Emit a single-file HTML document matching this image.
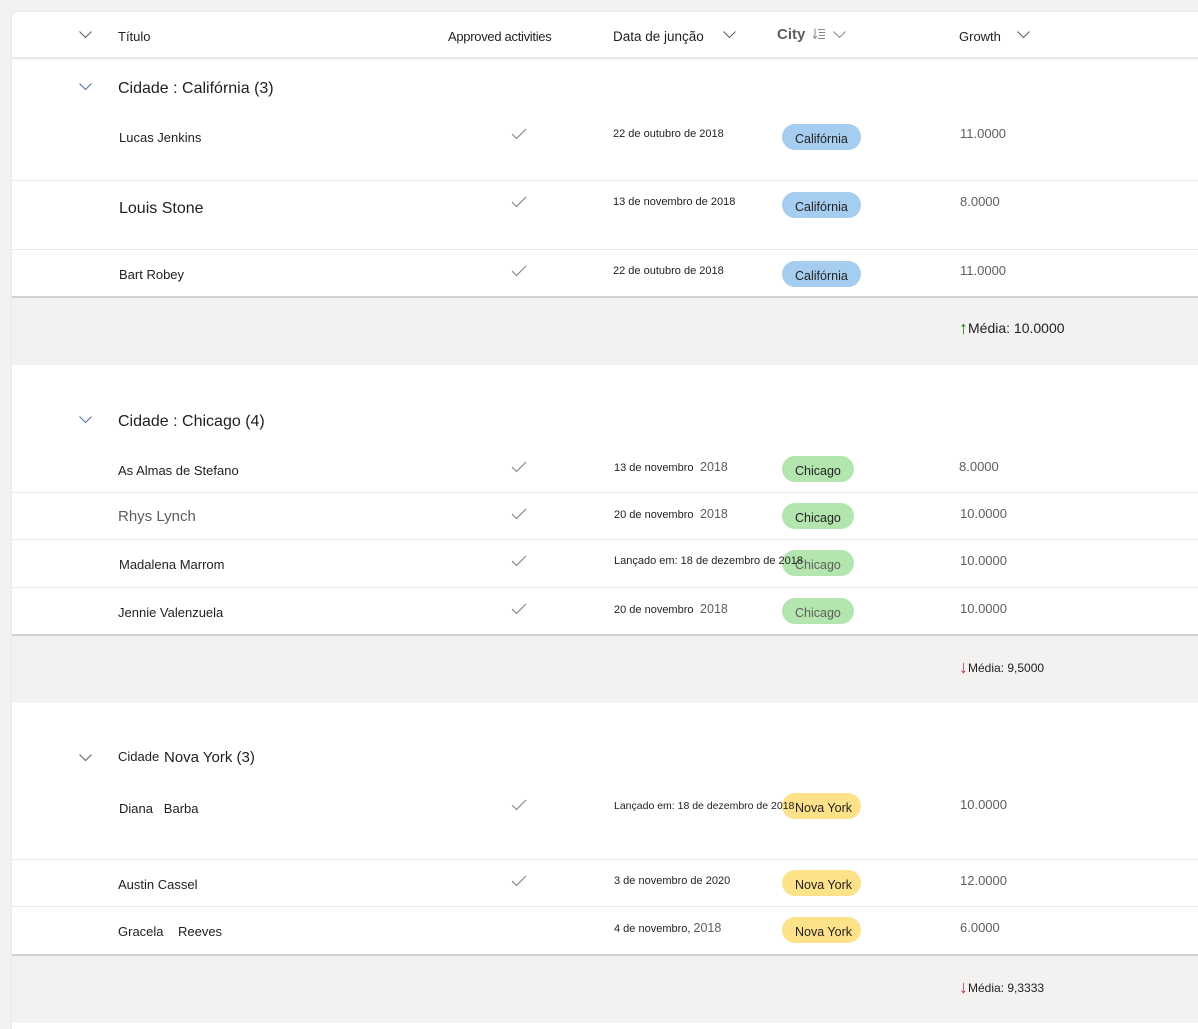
<!DOCTYPE html>
<html><head><meta charset="utf-8">
<style>
*{margin:0;padding:0;box-sizing:border-box}
html,body{width:1198px;height:1029px;overflow:hidden;background:#f3f2f1;font-family:"Liberation Sans",Arial,sans-serif;color:#201f1e}
#card{position:absolute;left:12px;top:12px;width:1186px;height:1017px;background:#fff;border-radius:6px 0 0 0;box-shadow:0 0 2px rgba(0,0,0,.12)}
.a{position:absolute;white-space:nowrap;line-height:16px}
.d{font-size:11px}
.hdr{position:absolute;left:12px;top:57px;width:1186px;height:3px;background:linear-gradient(#e6e6e6,#f6f6f6)}
.div{position:absolute;left:12px;width:1186px;height:1px;background:#edebe9}
.bd{position:absolute;left:12px;width:1186px;height:2px;background:#d2d0ce}
.foot{position:absolute;left:12px;width:1186px;height:67px;background:#f3f2f1}
.pill{position:absolute;height:26px;border-radius:13px;font-size:12.5px;line-height:30px;padding-left:13px}
.ca{background:#a5cdef;width:79px}
.ch{background:#b2e6ae;width:72px}
.ny{background:#fde28a;width:79px}
.g{color:#605e5c}
.ar{font-size:18px;position:relative;top:1px}
svg{position:absolute}
</style></head><body>
<div id="card"></div>
<div class="hdr"></div>

<!-- pills first -->
<div class="pill ca" style="left:782px;top:124px">Califórnia</div>
<div class="pill ca" style="left:782px;top:192px">Califórnia</div>
<div class="pill ca" style="left:782px;top:261px">Califórnia</div>
<div class="pill ch" style="left:782px;top:456px">Chicago</div>
<div class="pill ch" style="left:782px;top:503px">Chicago</div>
<div class="pill ch g" style="left:782px;top:550px">Chicago</div>
<div class="pill ch g" style="left:782px;top:598px">Chicago</div>
<div class="pill ny" style="left:782px;top:793px">Nova York</div>
<div class="pill ny" style="left:782px;top:870px">Nova York</div>
<div class="pill ny" style="left:782px;top:917px">Nova York</div>

<!-- header -->
<svg style="left:79px;top:31px" width="13" height="8" viewBox="0 0 13 8"><path d="M0.5 0.5L6.5 6.5L12.5 0.5" fill="none" stroke="#605e5c" stroke-width="1"/></svg>
<div class="a" style="left:118px;top:29px;font-size:13px">Título</div>
<div class="a" style="left:448px;top:29px;font-size:13px;letter-spacing:-0.3px">Approved activities</div>
<div class="a" style="left:613px;top:29px;font-size:13.5px">Data de junção</div>
<svg style="left:723px;top:31px" width="13" height="8" viewBox="0 0 13 8"><path d="M0.5 0.5L6.5 6.5L12.5 0.5" fill="none" stroke="#605e5c"/></svg>
<div class="a" style="left:777px;top:27px;font-size:15px;color:#605e5c;font-weight:bold">City</div>
<svg style="left:813px;top:28px" width="13" height="13" viewBox="0 0 13 13"><path d="M2 0.5V10M0 8L2 10.5L4 8M5 1.5H12M6 4.5H12M6 7.5H12M5 10.5H12" fill="none" stroke="#8a8886"/></svg>
<svg style="left:833px;top:31px" width="13" height="8" viewBox="0 0 13 8"><path d="M0.5 0.5L6.5 6.5L12.5 0.5" fill="none" stroke="#8a8886"/></svg>
<div class="a" style="left:959px;top:29px;font-size:13px">Growth</div>
<svg style="left:1017px;top:31px" width="13" height="8" viewBox="0 0 13 8"><path d="M0.5 0.5L6.5 6.5L12.5 0.5" fill="none" stroke="#605e5c"/></svg>

<!-- group 1 -->
<svg style="left:79px;top:83px" width="13" height="8" viewBox="0 0 13 8"><path d="M0.5 0.5L6.5 6.5L12.5 0.5" fill="none" stroke="#4a6fa0"/></svg>
<div class="a" style="left:118px;top:79px;font-size:16px;line-height:20px">Cidade : Califórnia (3)</div>

<div class="a" style="left:119px;top:130px;font-size:13px">Lucas Jenkins</div>
<div class="a d" style="left:613px;top:126px">22 de outubro de 2018</div>
<div class="a g" style="left:960px;top:126px;font-size:13px">11.0000</div>
<div class="div" style="top:180px"></div>

<div class="a" style="left:119px;top:199px;font-size:16px;line-height:20px">Louis Stone</div>
<div class="a d" style="left:613px;top:194px">13 de novembro de 2018</div>
<div class="a g" style="left:960px;top:194px;font-size:13px">8.0000</div>
<div class="div" style="top:249px"></div>

<div class="a" style="left:119px;top:267px;font-size:13px">Bart Robey</div>
<div class="a d" style="left:613px;top:263px">22 de outubro de 2018</div>
<div class="a g" style="left:960px;top:263px;font-size:13px">11.0000</div>
<div class="bd" style="top:296px"></div>
<div class="foot" style="top:298px"></div>
<div class="a" style="left:959px;top:318px;font-size:14px;line-height:18px"><span class="ar" style="color:#107c10">↑</span>Média: 10.0000</div>

<!-- group 2 -->
<svg style="left:79px;top:416px" width="13" height="8" viewBox="0 0 13 8"><path d="M0.5 0.5L6.5 6.5L12.5 0.5" fill="none" stroke="#4a6fa0"/></svg>
<div class="a" style="left:118px;top:412px;font-size:16px;line-height:20px">Cidade : Chicago (4)</div>

<div class="a" style="left:118px;top:463px;font-size:13px">As Almas de Stefano</div>
<div class="a d" style="left:614px;top:459px">13 de novembro <span class="g" style="font-size:12.5px">&nbsp;2018</span></div>
<div class="a g" style="left:959px;top:459px;font-size:13px">8.0000</div>
<div class="div" style="top:492px"></div>

<div class="a g" style="left:118px;top:508px;font-size:15px;line-height:18px">Rhys Lynch</div>
<div class="a d" style="left:614px;top:506px">20 de novembro <span class="g" style="font-size:12.5px">&nbsp;2018</span></div>
<div class="a g" style="left:960px;top:506px;font-size:13px">10.0000</div>
<div class="div" style="top:539px"></div>

<div class="a" style="left:119px;top:557px;font-size:13px">Madalena Marrom</div>
<div class="a d" style="left:614px;top:553px">Lançado em: 18 de dezembro de 2018</div>
<div class="a g" style="left:960px;top:553px;font-size:13px">10.0000</div>
<div class="div" style="top:587px"></div>

<div class="a" style="left:118px;top:605px;font-size:13px">Jennie Valenzuela</div>
<div class="a d" style="left:614px;top:601px">20 de novembro <span class="g" style="font-size:12.5px">&nbsp;2018</span></div>
<div class="a g" style="left:960px;top:601px;font-size:13px">10.0000</div>
<div class="bd" style="top:634px"></div>
<div class="foot" style="top:636px"></div>
<div class="a" style="left:959px;top:658px;font-size:12px"><span class="ar" style="color:#c4314b">↓</span>Média: 9,5000</div>

<!-- group 3 -->
<svg style="left:79px;top:754px" width="13" height="8" viewBox="0 0 13 8"><path d="M0.5 0.5L6.5 6.5L12.5 0.5" fill="none" stroke="#605e5c"/></svg>
<div class="a" style="left:118px;top:749px;font-size:13px">Cidade</div>
<div class="a" style="left:164px;top:749px;font-size:15px;line-height:18px">Nova York (3)</div>

<div class="a" style="left:119px;top:801px;font-size:13px">Diana&nbsp;&nbsp;&nbsp;Barba</div>
<div class="a" style="left:614px;top:798px;font-size:10.5px">Lançado em: 18 de dezembro de 2018</div>
<div class="a g" style="left:960px;top:797px;font-size:13px">10.0000</div>
<div class="div" style="top:859px"></div>

<div class="a" style="left:118px;top:877px;font-size:13px">Austin Cassel</div>
<div class="a d" style="left:614px;top:873px">3 de novembro de 2020</div>
<div class="a g" style="left:960px;top:873px;font-size:13px">12.0000</div>
<div class="div" style="top:906px"></div>

<div class="a" style="left:118px;top:924px;font-size:13px">Gracela&nbsp;&nbsp;&nbsp;&nbsp;Reeves</div>
<div class="a d" style="left:614px;top:920px">4 de novembro, <span class="g" style="font-size:12.5px">2018</span></div>
<div class="a g" style="left:960px;top:920px;font-size:13px">6.0000</div>
<div class="bd" style="top:954px"></div>
<div class="foot" style="top:956px"></div>
<div class="a" style="left:959px;top:978px;font-size:12px"><span class="ar" style="color:#c4314b">↓</span>Média: 9,3333</div>

<!-- checks -->
<svg style="left:511px;top:127px" width="16" height="14" viewBox="0 0 16 14"><path d="M1 7L5.5 11.5L15 2" fill="none" stroke="#8a8886" stroke-width="1.2"/></svg>
<svg style="left:511px;top:195px" width="16" height="14" viewBox="0 0 16 14"><path d="M1 7L5.5 11.5L15 2" fill="none" stroke="#8a8886" stroke-width="1.2"/></svg>
<svg style="left:511px;top:264px" width="16" height="14" viewBox="0 0 16 14"><path d="M1 7L5.5 11.5L15 2" fill="none" stroke="#8a8886" stroke-width="1.2"/></svg>
<svg style="left:511px;top:460px" width="16" height="14" viewBox="0 0 16 14"><path d="M1 7L5.5 11.5L15 2" fill="none" stroke="#8a8886" stroke-width="1.2"/></svg>
<svg style="left:511px;top:507px" width="16" height="14" viewBox="0 0 16 14"><path d="M1 7L5.5 11.5L15 2" fill="none" stroke="#8a8886" stroke-width="1.2"/></svg>
<svg style="left:511px;top:554px" width="16" height="14" viewBox="0 0 16 14"><path d="M1 7L5.5 11.5L15 2" fill="none" stroke="#8a8886" stroke-width="1.2"/></svg>
<svg style="left:511px;top:602px" width="16" height="14" viewBox="0 0 16 14"><path d="M1 7L5.5 11.5L15 2" fill="none" stroke="#8a8886" stroke-width="1.2"/></svg>
<svg style="left:511px;top:798px" width="16" height="14" viewBox="0 0 16 14"><path d="M1 7L5.5 11.5L15 2" fill="none" stroke="#8a8886" stroke-width="1.2"/></svg>
<svg style="left:511px;top:874px" width="16" height="14" viewBox="0 0 16 14"><path d="M1 7L5.5 11.5L15 2" fill="none" stroke="#8a8886" stroke-width="1.2"/></svg>
</body></html>
